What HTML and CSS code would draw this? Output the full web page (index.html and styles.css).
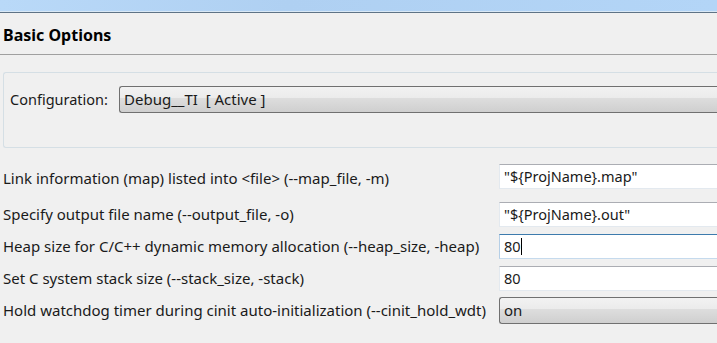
FILE: index.html
```html
<!DOCTYPE html>
<html lang="en">
<head>
  <meta charset="UTF-8" />
  <meta name="viewport" content="width=device-width, initial-scale=1.0"/>
  <title>Basic Options</title>
  <link rel="stylesheet" href="styles.css">
</head>
<body>
  <div class="titlebar"></div>

  <div class="header">
    <h1>Basic Options</h1>
  </div>

  <div class="group">
    <label class="config-label">Configuration:</label>
    <div class="combo config-combo">Debug__TI&nbsp;&nbsp;[ Active ]</div>
  </div>

  <div class="options">
    <div class="row first">
      <label>Link information (map) listed into &lt;file&gt; (--map_file, -m)</label>
      <div class="field">"${ProjName}.map"</div>
    </div>
    <div class="row">
      <label>Specify output file name (--output_file, -o)</label>
      <div class="field">"${ProjName}.out"</div>
    </div>
    <div class="row">
      <label>Heap size for C/C++ dynamic memory allocation (--heap_size, -heap)</label>
      <div class="field focused">80<span class="caret"></span></div>
    </div>
    <div class="row">
      <label>Set C system stack size (--stack_size, -stack)</label>
      <div class="field">80</div>
    </div>
    <div class="row">
      <label>Hold watchdog timer during cinit auto-initialization (--cinit_hold_wdt)</label>
      <div class="combo">on</div>
    </div>
  </div>
</body>
</html>
```

FILE: styles.css
```css
:root {
  --fundo: #f0f0f0;
  --texto: #1a1a1a;
  --borda-campo: #e3e9ef;
  --borda-topo: #abadb3;
}

html, body {
  margin: 0;
  padding: 0;
  overflow: hidden;
}

body {
  width: 717px;
  height: 343px;
  background: var(--fundo);
  color: var(--texto);
  font-family: "Noto Sans", "Open Sans", sans-serif;
  font-size: 15px;
}

.titlebar {
  height: 11px;
  background: linear-gradient(to right, #b9d9f8, #afd0f2 40%, #b3d5f7);
  border-bottom: 1px solid #d9e8f5;
  box-shadow: 0 1px 0 #5e7386;
  margin-bottom: 1px;
}

.header {
  height: 41px;
  border-bottom: 1px solid #a0a0a0;
  display: flex;
  align-items: center;
  padding-left: 3px;
}

.header h1 {
  margin: 0;
  font-size: 16px;
  font-weight: bold;
  color: #000;
  padding-top: 2px;
}

.group {
  margin: 17px 0 0 3px;
  height: 76px;
  border: 1px solid #d5dfe5;
  border-right: none;
  border-radius: 3px 0 0 3px;
  display: flex;
  align-items: flex-start;
  padding-top: 13px;
  box-sizing: border-box;
}

.config-label {
  margin-left: 6px;
  width: 109px;
  line-height: 27px;
  font-size: 14.5px;
}

.combo {
  flex: 1;
  height: 27px;
  box-sizing: border-box;
  border: 1px solid #707070;
  border-right: none;
  border-radius: 3px 0 0 3px;
  background: linear-gradient(to bottom, #f2f2f2 0%, #ebebeb 45%, #dddddd 46%, #cfcfcf 100%);
  padding-left: 4px;
  line-height: 25px;
  white-space: nowrap;
}

.options {
  margin-top: 16px;
  padding-left: 3px;
}

.row {
  display: flex;
  align-items: center;
  height: 32px;
}

.row.first {
  height: 34px;
  align-items: flex-start;
}

.row label {
  width: 496px;
  white-space: nowrap;
}

.row.first label {
  line-height: 25px;
  padding-top: 2px;
}

.field {
  flex: 1;
  height: 25px;
  box-sizing: border-box;
  background: #fff;
  border: 1px solid var(--borda-campo);
  border-top-color: var(--borda-topo);
  border-right: none;
  padding-left: 4px;
  line-height: 23px;
  font-size: 14.5px;
  white-space: nowrap;
}

.field.focused {
  border-color: #c5daed;
  border-top-color: #3d7bad;
  border-left-color: #b5cfe7;
}

.caret {
  display: inline-block;
  width: 1px;
  height: 17px;
  background: #000;
  vertical-align: -3px;
}
```
